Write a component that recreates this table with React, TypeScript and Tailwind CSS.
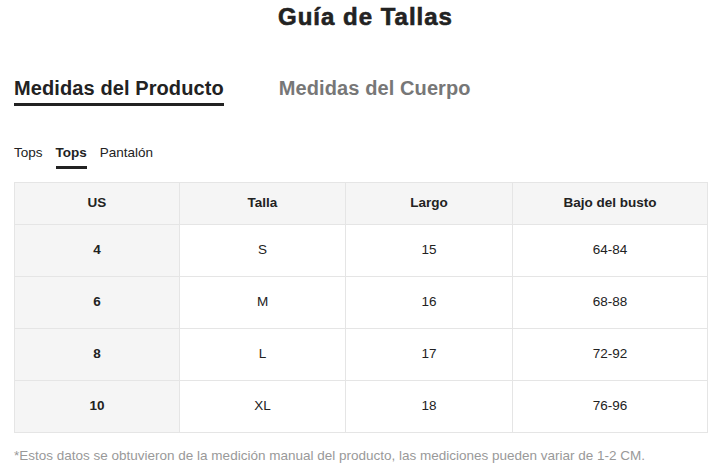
const rows = [
  { us: "4", talla: "S", largo: "15", busto: "64-84" },
  { us: "6", talla: "M", largo: "16", busto: "68-88" },
  { us: "8", talla: "L", largo: "17", busto: "72-92" },
  { us: "10", talla: "XL", largo: "18", busto: "76-96" },
];

export default function App() {
  return (
    <div className="w-[717px] h-[472px] bg-white text-[#222] font-['Liberation_Sans',Arial,sans-serif]">
      <h1 className="pt-[2px] pl-[14px] text-center text-[24px] leading-[30px] font-bold tracking-[1px] [-webkit-text-stroke:0.6px_#222]">
        Guía de Tallas
      </h1>

      <div className="mt-[43px] flex gap-[55px] px-[14px]">
        <div className="border-b-[3px] border-[#222] pb-[2px] text-[20px] leading-[26px] font-bold tracking-[0.1px]">
          Medidas del Producto
        </div>
        <div className="text-[20px] leading-[26px] font-bold text-[#777] tracking-[0.1px]">Medidas del Cuerpo</div>
      </div>

      <div className="mt-[38px] flex gap-[13px] px-[14px] text-[13.5px] leading-[17px]">
        <div className="pb-[8px]">Tops</div>
        <div className="border-b-[3px] border-[#222] pb-[5px] font-bold">Tops</div>
        <div className="pb-[8px]">Pantalón</div>
      </div>

      <table className="mx-[14px] mt-[13px] w-[693px] table-fixed border-collapse text-center text-[13.5px]">
        <colgroup>
          <col className="w-[165px]" />
          <col className="w-[166px]" />
          <col className="w-[167px]" />
          <col className="w-[195px]" />
        </colgroup>
        <thead>
          <tr className="h-[42px] bg-[#f5f5f5] font-bold">
            <th className="border border-[#e5e5e5]">US</th>
            <th className="border border-[#e5e5e5]">Talla</th>
            <th className="border border-[#e5e5e5]">Largo</th>
            <th className="border border-[#e5e5e5]">Bajo del busto</th>
          </tr>
        </thead>
        <tbody>
          {rows.map((r) => (
            <tr key={r.us} className="h-[52px]">
              <td className="border border-[#e5e5e5] bg-[#f5f5f5] font-bold">{r.us}</td>
              <td className="border border-[#e5e5e5]">{r.talla}</td>
              <td className="border border-[#e5e5e5]">{r.largo}</td>
              <td className="border border-[#e5e5e5]">{r.busto}</td>
            </tr>
          ))}
        </tbody>
      </table>

      <p className="mt-[15px] px-[14px] text-[13.5px] leading-[16px] text-[#999]">
        *Estos datos se obtuvieron de la medición manual del producto, las mediciones pueden variar de 1-2 CM.
      </p>
    </div>
  );
}
